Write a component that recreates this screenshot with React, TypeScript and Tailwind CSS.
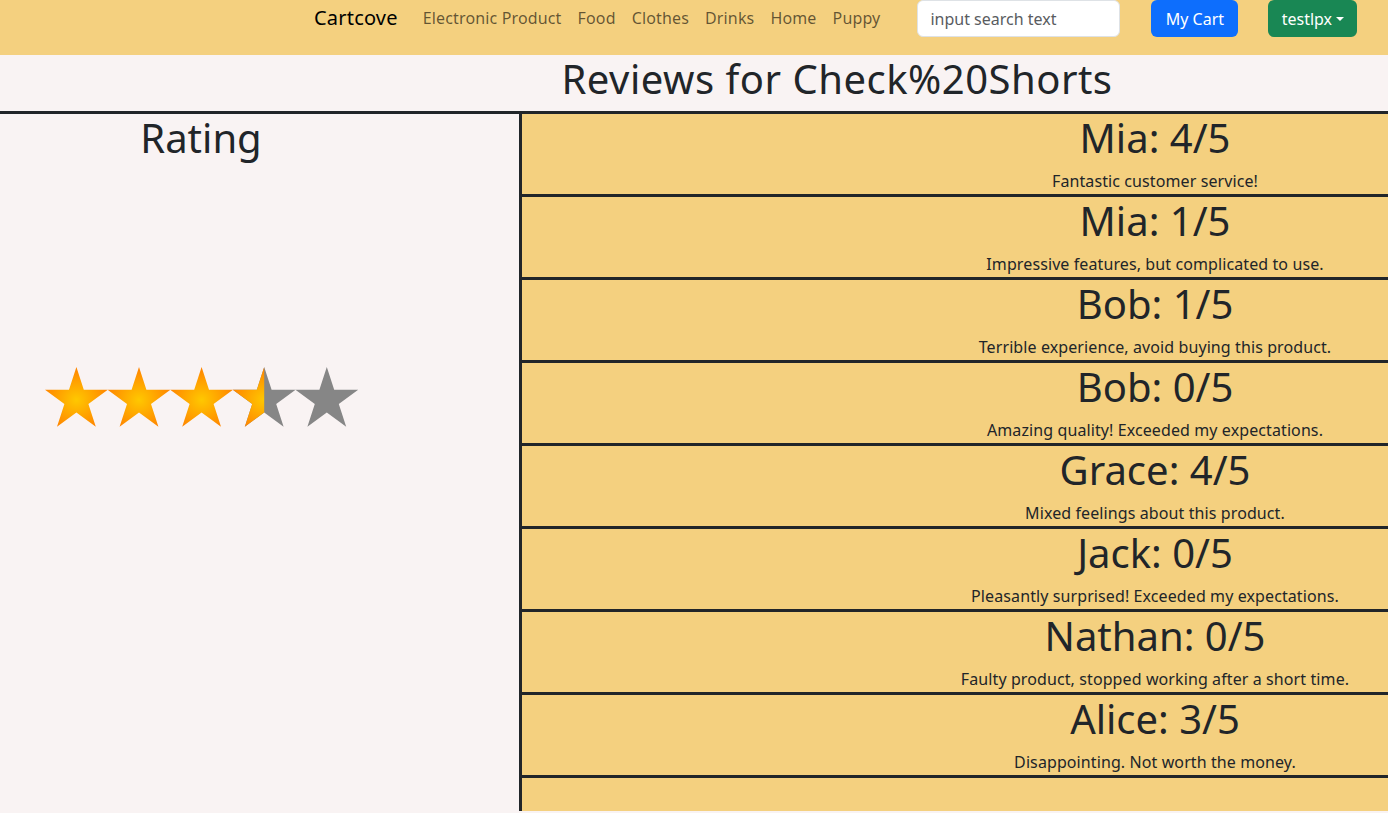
import React from "react"

const reviews = [
  { name: "Mia", score: 4, comment: "Fantastic customer service!" },
  { name: "Mia", score: 1, comment: "Impressive features, but complicated to use." },
  { name: "Bob", score: 1, comment: "Terrible experience, avoid buying this product." },
  { name: "Bob", score: 0, comment: "Amazing quality! Exceeded my expectations." },
  { name: "Grace", score: 4, comment: "Mixed feelings about this product." },
  { name: "Jack", score: 0, comment: "Pleasantly surprised! Exceeded my expectations." },
  { name: "Nathan", score: 0, comment: "Faulty product, stopped working after a short time." },
  { name: "Alice", score: 3, comment: "Disappointing. Not worth the money." },
]

const links = ["Electronic Product", "Food", "Clothes", "Drinks", "Home", "Puppy"]

const STAR = "M31.4 0 L38.8 22.8 L62.8 22.8 L43.4 36.9 L50.8 59.7 L31.4 45.6 L12 59.7 L19.4 36.9 L0 22.8 L24 22.8 Z"

function Stars({ rating }: { rating: number }) {
  const step = 62.6
  return (
    <svg width="316" height="61" viewBox="0 0 316 61">
      <defs>
        <radialGradient id="gold" cx="50%" cy="55%" r="55%">
          <stop offset="0%" stopColor="#ffc800" />
          <stop offset="100%" stopColor="#ff8200" />
        </radialGradient>
        <clipPath id="half">
          <rect x="0" y="0" width="31.4" height="61" />
        </clipPath>
      </defs>
      {[0, 1, 2, 3, 4].map((i) => {
        const full = rating >= i + 1
        const half = !full && rating > i
        return (
          <g key={i} transform={`translate(${i * step} 0)`}>
            <path d={STAR} fill={full ? "url(#gold)" : "#868686"} />
            {half && <path d={STAR} fill="url(#gold)" clipPath="url(#half)" />}
          </g>
        )
      })}
    </svg>
  )
}

export default function App() {
  return (
    <div
      className="w-[1388px] h-[813px] overflow-hidden bg-[#f9f3f3] text-[#212529]"
      style={{ fontFamily: '"Noto Sans", "Open Sans", sans-serif' }}
    >
      {/* Navbar */}
      <div className="h-[55px] bg-[#f4d07f] flex items-start">
        <div className="pl-[314px] pt-[4px] text-[20px] leading-[28px] tracking-[0.2px] text-black">Cartcove</div>
        <div className="flex ml-[17px] pt-[6px]">
          {links.map((l) => (
            <span key={l} className="px-[8px] text-[16px] leading-[24px] tracking-[0.15px] text-black/60">
              {l}
            </span>
          ))}
        </div>
        <div className="ml-[29px] w-[203px] h-[37px] bg-white border border-[#dee2e6] rounded-[6px] px-[12px] flex items-center text-[16px] text-[#595c5f]">
          input search text
        </div>
        <button className="ml-[31px] h-[37px] w-[87px] rounded-[6px] bg-[#0d6efd] text-white text-[16px]">
          My Cart
        </button>
        <button className="ml-[30px] h-[37px] w-[89px] rounded-[6px] bg-[#198754] text-white text-[16px] flex items-center justify-center gap-[4px]">
          testlpx
          <span className="w-0 h-0 border-l-[4px] border-r-[4px] border-t-[4px] border-l-transparent border-r-transparent border-t-white" />
        </button>
      </div>

      {/* Title */}
      <div className="h-[56px] pl-[286px] flex items-start justify-center text-[40px] leading-[48px] tracking-[0.5px]">
        Reviews for Check%20Shorts
      </div>

      {/* Body */}
      <div className="flex border-t-[3px] border-[#212529] h-[700px]">
        <div className="w-[522px] shrink-0 border-r-[3px] border-[#212529]">
          <div className="w-[402px] text-center text-[40px] leading-[48px]">Rating</div>
          <div className="pl-[45px] pt-[205px]">
            <Stars rating={3.5} />
          </div>
        </div>
        <div className="flex-1 bg-[#f4d07f]">
          {reviews.map((r, i) => (
            <div key={i} className="h-[83px] pl-[400px] border-b-[3px] border-[#212529] flex flex-col items-center">
              <div className="text-[40px] leading-[48px]">
                {r.name}: {r.score}/5
              </div>
              <div className="text-[16px] leading-[24px] mt-[7px] tracking-[0.1px] whitespace-nowrap">{r.comment}</div>
            </div>
          ))}
        </div>
      </div>
    </div>
  )
}
